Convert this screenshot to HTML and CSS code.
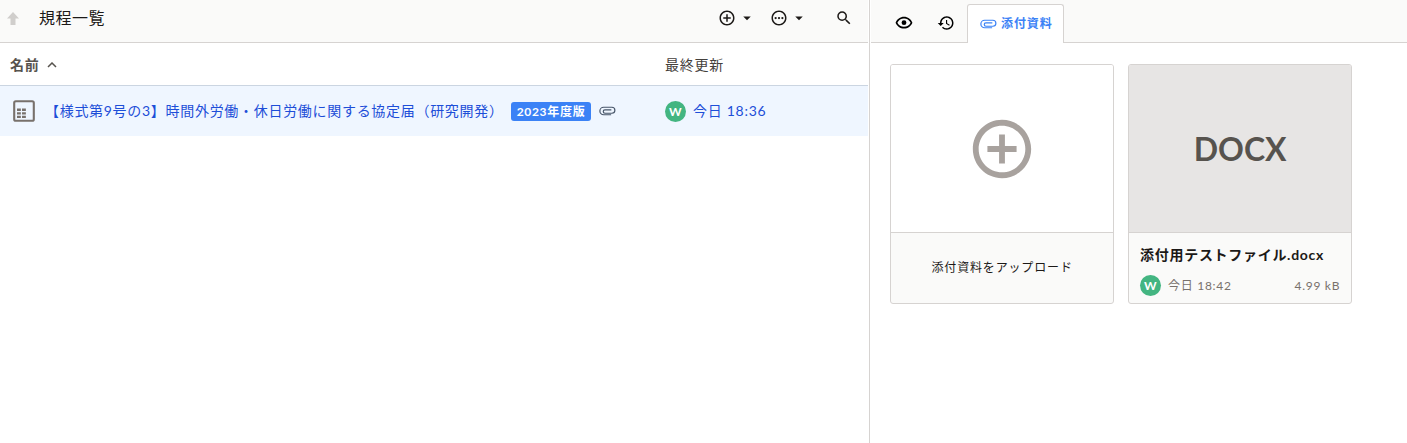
FILE: index.html
```html
<!DOCTYPE html>
<html lang="ja">
<head>
  <meta charset="utf-8">
  <title>規程一覧</title>
  <link rel="stylesheet" href="styles.css">
</head>
<body>
  <div class="app">
    <main class="list-pane">
      <header class="toolbar">
        <button class="icon-btn up-btn" aria-label="上へ" disabled>
          <svg viewBox="0 0 12 13"><path d="M6 0l6 6.500H8.500V13h-5V6.500H0z"/></svg>
        </button>
        <h1>規程一覧</h1>
        <div class="actions">
          <button class="icon-btn" aria-label="新規作成">
            <svg viewBox="0 0 24 24"><path d="M13 7h-2v4H7v2h4v4h2v-4h4v-2h-4V7zm-1-5C6.480 2 2 6.480 2 12s4.480 10 10 10 10-4.480 10-10S17.520 2 12 2zm0 18c-4.410 0-8-3.590-8-8s3.590-8 8-8 8 3.590 8 8-3.590 8-8 8z"/></svg>
            <svg viewBox="0 0 24 24"><path d="M7 10l5 5 5-5z"/></svg>
          </button>
          <button class="icon-btn" aria-label="その他">
            <svg viewBox="0 0 24 24"><path d="M12 2C6.480 2 2 6.480 2 12s4.480 10 10 10 10-4.480 10-10S17.520 2 12 2zm0 18c-4.410 0-8-3.590-8-8s3.590-8 8-8 8 3.590 8 8-3.590 8-8 8z"/><circle cx="7.500" cy="12" r="1.500"/><circle cx="12" cy="12" r="1.500"/><circle cx="16.500" cy="12" r="1.500"/></svg>
            <svg viewBox="0 0 24 24"><path d="M7 10l5 5 5-5z"/></svg>
          </button>
          <button class="icon-btn search-btn" aria-label="検索">
            <svg viewBox="0 0 24 24"><path d="M15.500 14h-.79l-.28-.27A6.471 6.471 0 0 0 16 9.500 6.500 6.500 0 1 0 9.500 16c1.610 0 3.090-.59 4.230-1.570l.27.28v.79l5 4.990L20.490 19l-4.990-5zm-6 0C7.010 14 5 11.990 5 9.500S7.010 5 9.500 5 14 7.010 14 9.500 11.990 14 9.500 14z"/></svg>
          </button>
        </div>
      </header>

      <table class="files">
        <thead>
          <tr>
            <th class="sorted">名前 <svg class="sort" viewBox="0 0 10 6"><path d="M1 5l4-4 4 4"/></svg></th>
            <th class="updated">最終更新</th>
          </tr>
        </thead>
        <tbody>
          <tr>
            <td>
              <div class="cell">
                <svg class="doc" viewBox="0 0 24 24"><path d="M19 2.700H5A2.300 2.300 0 0 0 2.700 5v14A2.300 2.300 0 0 0 5 21.300h14a2.300 2.300 0 0 0 2.300-2.300V5A2.300 2.300 0 0 0 19 2.700zm0 16.800H5a.5.5 0 0 1-.5-.5V5a.5.5 0 0 1 .5-.5h14a.5.5 0 0 1 .5.5v14a.5.5 0 0 1-.5.5zM6 9.900h3.300v2H6zM10.300 9.900h3.300v2h-3.300zM6 13h3.300v2H6zM10.300 13h3.300v2h-3.300zM6 16.100h3.300v2H6zM10.300 16.100h3.300v2h-3.300z"/></svg>
                <a href="#">【様式第9号の3】時間外労働・休日労働に関する協定届（研究開発）</a>
                <span class="badge">2023年度版</span>
                <svg class="clip" viewBox="0 0 24 24"><path d="M17.500 17H7.500a5 5 0 0 1 0-10h11a4 4 0 0 1 0 8H9.200a2.200 2.200 0 0 1 0-4.400h8.600"/></svg>
              </div>
            </td>
            <td>
              <div class="cell"><span class="avatar">W</span><a href="#">今日 18:36</a></div>
            </td>
          </tr>
        </tbody>
      </table>
    </main>

    <div class="splitter"></div>

    <aside class="detail-pane">
      <nav class="tabs">
        <button class="tab" aria-label="プレビュー">
          <svg viewBox="0 0 24 24"><path d="M12 6c3.790 0 7.170 2.130 8.820 5.500C19.170 14.870 15.790 17 12 17s-7.170-2.130-8.820-5.500C4.830 8.130 8.210 6 12 6m0-2.300C7 3.700 2.500 7 .8 11.500 2.500 16 7 19.300 12 19.300s9.500-3.300 11.200-7.800C21.500 7 17 3.700 12 3.700z"/><circle cx="12" cy="11.500" r="3.200"/></svg>
        </button>
        <button class="tab" aria-label="履歴">
          <svg viewBox="0 0 24 24"><path d="M13 3c-4.970 0-9 4.030-9 9H1l3.890 3.890.07.14L9 12H6c0-3.870 3.130-7 7-7s7 3.130 7 7-3.130 7-7 7c-1.930 0-3.680-.79-4.940-2.060l-1.420 1.420C8.270 19.990 10.510 21 13 21c4.970 0 9-4.030 9-9s-4.030-9-9-9zm-1 5v5l4.280 2.540.72-1.210-3.500-2.080V8H12z"/></svg>
        </button>
        <button class="tab active">
          <svg class="clip" viewBox="0 0 24 24"><path d="M17.500 17H7.500a5 5 0 0 1 0-10h11a4 4 0 0 1 0 8H9.200a2.200 2.200 0 0 1 0-4.400h8.600"/></svg>
          添付資料
        </button>
      </nav>

      <div class="cards">
        <button class="card upload">
          <span class="thumb">
            <svg viewBox="0 0 24 24"><path d="M13 7h-2v4H7v2h4v4h2v-4h4v-2h-4V7zm-1-5C6.480 2 2 6.480 2 12s4.480 10 10 10 10-4.480 10-10S17.520 2 12 2zm0 18c-4.410 0-8-3.590-8-8s3.590-8 8-8 8 3.590 8 8-3.590 8-8 8z"/></svg>
          </span>
          <span class="info">添付資料をアップロード</span>
        </button>
        <div class="card file">
          <div class="thumb">DOCX</div>
          <div class="info">
            <div class="filename">添付用テストファイル.docx</div>
            <div class="meta">
              <span class="avatar">W</span>
              <span>今日 18:42</span>
              <span class="size">4.99 kB</span>
            </div>
          </div>
        </div>
      </div>
    </aside>
  </div>
</body>
</html>
```
FILE: styles.css
```css
* { box-sizing: border-box; }
body {
  margin: 0;
  font-family: Lato, "Noto Sans CJK JP", sans-serif;
  font-size: 14px; line-height: 20px; letter-spacing: 0.05em;
  color: #1c1917; background: #fff;
}
button {
  font: inherit; letter-spacing: inherit; color: inherit;
  padding: 0; border: none; background: none; cursor: pointer;
}
svg { display: block; flex: none; fill: currentColor; }
a { color: #1d4ed8; text-decoration: none; }

.app { display: flex; min-height: 100vh; }
.list-pane { width: 61.7%; }
.splitter { width: 3px; border: solid #fff; border-width: 0 1px; background: #d6d3d1; }
.detail-pane { flex: 1; }

/* list toolbar */
.toolbar {
  display: flex; align-items: center; height: 43px; padding: 0 15px 6px 7px;
  background: #fafaf9; border-bottom: 1px solid #d6d3d1;
}
.icon-btn { display: flex; align-items: center; gap: 2px; }
.icon-btn svg { width: 18px; height: 18px; }
.up-btn { color: #d0cecc; }
.up-btn svg { width: 12px; height: 13px; }
h1 { margin: 0 auto 0 20px; font-size: 16px; font-weight: 400; letter-spacing: 0.03em; }
.actions { display: flex; gap: 14px; }
.search-btn { margin-left: 13px; }

/* file table */
.files { width: 100%; table-layout: fixed; border-collapse: separate; border-spacing: 0; }
th {
  height: 43px; padding: 2px 10px 0; text-align: left;
  font-weight: 400; color: #44403c; border-bottom: 1px solid #cbd5e1;
}
th.sorted { font-weight: 700; color: #57534e; }
th.updated { width: 213px; }
.sort {
  display: inline-block; width: 10px; height: 6px; margin-left: 3px;
  vertical-align: 2px; fill: none; stroke: currentColor; stroke-width: 1.5;
}
td { height: 50px; padding: 0 10px; background: #eff6ff; }
.cell { display: flex; align-items: center; gap: 7px; white-space: nowrap; }
.doc { width: 28px; height: 28px; color: #78716c; }
.clip { width: 18px; height: 18px; fill: none; stroke: currentColor; stroke-width: 1.6; }
.cell .clip { color: #475569; }
.badge {
  padding: 0 6px; border-radius: 3px; line-height: 19px;
  font-size: 12px; font-weight: 700; color: #fff; background: #3b82f6;
}
.avatar {
  width: 21px; height: 21px; border-radius: 50%; line-height: 21px;
  font-size: 12px; font-weight: 700; text-align: center; color: #fff; background: #43b581;
}

/* detail tabs */
.tabs {
  display: flex; align-items: flex-end; height: 43px; padding-left: 12px;
  background: #fafaf9; border-bottom: 1px solid #d6d3d1;
}
.tab {
  display: flex; align-items: center; gap: 4px; height: 39px; padding: 0 12px;
  color: #000;
}
.tab svg { width: 18px; height: 18px; }
.tab.active {
  margin-bottom: -1px; padding: 0 11px; border: 1px solid #d6d3d1; border-bottom: none;
  border-radius: 3px 3px 0 0; background: #fff;
  font-size: 12px; font-weight: 700; letter-spacing: 0.07em; color: #3b82f6;
}

/* attachment cards */
.cards { display: flex; flex-wrap: wrap; gap: 14px; padding: 21px 19px; }
.card {
  display: flex; flex-direction: column; width: 224px; height: 240px;
  border: 1px solid #d6d3d1; border-radius: 3px; background: #fafaf9; overflow: hidden;
}
.thumb {
  display: flex; flex: none; align-items: center; justify-content: center;
  width: 100%; height: 168px; border-bottom: 1px solid #d6d3d1;
}
.upload .thumb { background: #fff; color: #a8a29e; }
.upload .thumb svg { width: 70px; height: 70px; }
.upload .info { margin: auto; font-size: 12px; letter-spacing: 0.07em; }
.file .thumb { font-size: 32px; font-weight: 700; letter-spacing: 0; color: #57534e; background: #e7e5e4; }
.file .info { padding: 12px 11px; }
.filename { font-weight: 700; }
.meta {
  display: flex; align-items: center; gap: 7px; margin-top: 10px;
  font-size: 12px; color: #78716c;
}
.size { margin-left: auto; }
```
